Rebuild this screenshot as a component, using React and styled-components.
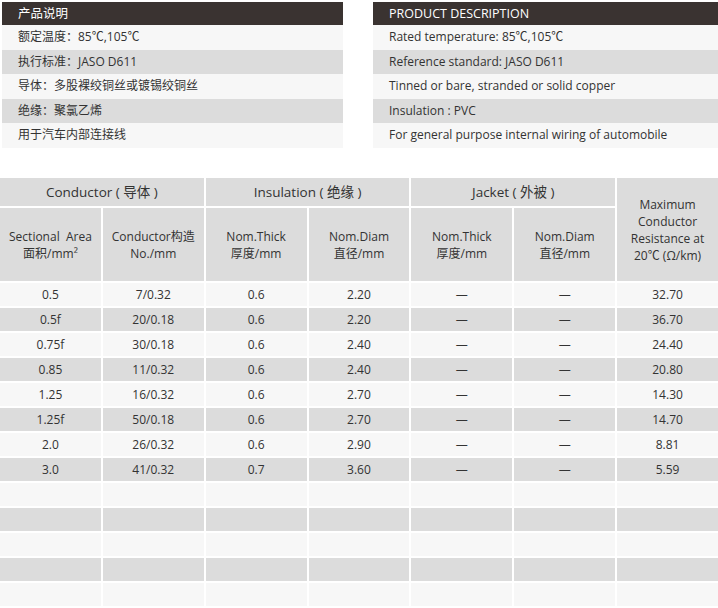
import React from "react";
import styled, { createGlobalStyle } from "styled-components";

const G = createGlobalStyle`
  body { margin: 0; background: #fff; font-family: "Open Sans", "Noto Sans CJK SC", sans-serif; color: #333; }
`;
const Page = styled.div`width: 718px; height: 608px; overflow: hidden;`;
const Top = styled.div`display: flex; justify-content: space-between; padding: 2px 0 0 2px; height: 176px;`;
const Panel = styled.div`width: ${p => p.w}px; display: flex; flex-direction: column;`;
const PanelHead = styled.div`background: #3a3331; color: #fff; height: 23px; line-height: 23px; padding-left: 16px; font-size: 12.5px;`;
const PanelRow = styled.div`background: ${p => p.alt ? "#dcdcdc" : "#f7f7f7"}; height: 24.5px; line-height: 24.5px; padding-left: 16px; font-size: 12px; color: #333;`;
const Table = styled.div`display: grid; grid-template-columns: repeat(7, 1fr); grid-template-rows: 28px 73px; grid-auto-rows: 23px; gap: 2px; width: 718px;`;
const Cell = styled.div`
  background: ${p => p.head ? "#dcdcdc" : p.alt ? "#dcdcdc" : "#f7f7f7"};
  grid-column: ${p => p.span ? `span ${p.span}` : "auto"};
  grid-row: ${p => p.rspan ? `span ${p.rspan}` : "auto"};
  display: flex; align-items: center; justify-content: center; text-align: center;
  font-size: ${p => p.big ? 13.5 : 12}px; line-height: 17px; color: #333;
`;

const left = ["额定温度：85℃,105℃", "执行标准：JASO D611", "导体：多股裸绞铜丝或镀锡绞铜丝", "绝缘：聚氯乙烯", "用于汽车内部连接线"];
const right = ["Rated temperature: 85℃,105℃", "Reference standard: JASO D611", "Tinned or bare, stranded or solid copper", "Insulation :  PVC", "For general purpose internal wiring of automobile"];
const data = [
  ["0.5","7/0.32","0.6","2.20","32.70"],
  ["0.5f","20/0.18","0.6","2.20","36.70"],
  ["0.75f","30/0.18","0.6","2.40","24.40"],
  ["0.85","11/0.32","0.6","2.40","20.80"],
  ["1.25","16/0.32","0.6","2.70","14.30"],
  ["1.25f","50/0.18","0.6","2.70","14.70"],
  ["2.0","26/0.32","0.6","2.90","8.81"],
  ["3.0","41/0.32","0.7","3.60","5.59"],
];

export default function App() {
  return (
    <Page>
      <G />
      <Top>
        <Panel w={341}>
          <PanelHead>产品说明</PanelHead>
          {left.map((t, i) => <PanelRow key={i} alt={i % 2 === 1}>{t}</PanelRow>)}
        </Panel>
        <Panel w={345}>
          <PanelHead>PRODUCT DESCRIPTION</PanelHead>
          {right.map((t, i) => <PanelRow key={i} alt={i % 2 === 1}>{t}</PanelRow>)}
        </Panel>
      </Top>
      <Table>
        <Cell head span={2} big>Conductor ( 导体 )</Cell>
        <Cell head span={2} big>Insulation ( 绝缘 )</Cell>
        <Cell head span={2} big>Jacket ( 外被 )</Cell>
        <Cell head rspan={2}><div>Maximum<br/>Conductor<br/>Resistance at<br/>20℃ (Ω/km)</div></Cell>
        <Cell head><div>Sectional&nbsp; Area<br/>面积/mm²</div></Cell>
        <Cell head><div>Conductor构造<br/>No./mm</div></Cell>
        <Cell head><div>Nom.Thick<br/>厚度/mm</div></Cell>
        <Cell head><div>Nom.Diam<br/>直径/mm</div></Cell>
        <Cell head><div>Nom.Thick<br/>厚度/mm</div></Cell>
        <Cell head><div>Nom.Diam<br/>直径/mm</div></Cell>
        {data.map((r, i) => (
          <React.Fragment key={i}>
            <Cell alt={i % 2 === 1}>{r[0]}</Cell>
            <Cell alt={i % 2 === 1}>{r[1]}</Cell>
            <Cell alt={i % 2 === 1}>{r[2]}</Cell>
            <Cell alt={i % 2 === 1}>{r[3]}</Cell>
            <Cell alt={i % 2 === 1}>—</Cell>
            <Cell alt={i % 2 === 1}>—</Cell>
            <Cell alt={i % 2 === 1}>{r[4]}</Cell>
          </React.Fragment>
        ))}
        {Array.from({ length: 5 * 7 }).map((_, k) => <Cell key={"e" + k} alt={Math.floor(k / 7) % 2 === 1} />)}
      </Table>
    </Page>
  );
}
